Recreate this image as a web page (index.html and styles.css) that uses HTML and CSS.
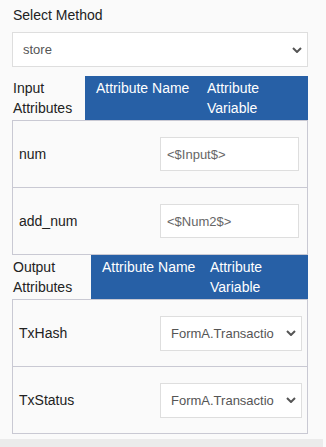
FILE: index.html
```html
<!DOCTYPE html>
<html lang="en">
<head>
  <meta charset="UTF-8">
  <title>Method Attributes</title>
  <link rel="stylesheet" href="styles.css">
</head>
<body>
  <div class="panel">

    <!-- Method -->
    <div class="field-label">Select Method</div>
    <div class="select-wrap method">
      <select>
        <option>store</option>
        <option>retrieve</option>
      </select>
      <svg class="chevron" viewBox="0 0 10 6"><path d="M1 1 L5 5 L9 1"/></svg>
    </div>

    <!-- Input Attributes -->
    <div class="attr-head input-head">
      <div class="attr-title">Input Attributes</div>
      <div class="col-name">Attribute Name</div>
      <div class="col-var">Attribute Variable</div>
    </div>
    <div class="attr-box">
      <div class="attr-row">
        <span class="attr-label">num</span>
        <input class="attr-input" type="text" value="<$Input$>">
      </div>
      <div class="attr-row">
        <span class="attr-label">add_num</span>
        <input class="attr-input" type="text" value="<$Num2$>">
      </div>
    </div>

    <!-- Output Attributes -->
    <div class="attr-head output-head">
      <div class="attr-title">Output Attributes</div>
      <div class="col-name">Attribute Name</div>
      <div class="col-var">Attribute Variable</div>
    </div>
    <div class="attr-box">
      <div class="attr-row">
        <span class="attr-label">TxHash</span>
        <div class="select-wrap attr-select">
          <select>
            <option>FormA.TransactionHash</option>
          </select>
          <svg class="chevron" viewBox="0 0 10 6"><path d="M1 1 L5 5 L9 1"/></svg>
        </div>
      </div>
      <div class="attr-row">
        <span class="attr-label">TxStatus</span>
        <div class="select-wrap attr-select">
          <select>
            <option>FormA.TransactionStatus</option>
          </select>
          <svg class="chevron" viewBox="0 0 10 6"><path d="M1 1 L5 5 L9 1"/></svg>
        </div>
      </div>
    </div>
  </div>
  <div class="footer-bar"></div>
</body>
</html>
```

FILE: styles.css
```css
body {
  margin: 0;
  background: #fafafa;
  color: #222;
  font-family: 'Liberation Sans', Arial, sans-serif;
  font-size: 14px;
}

.panel {
  width: 323px;
  box-sizing: border-box;
  padding: 7px 15px 5px 12px;
}

.field-label {
  line-height: 16px;
  margin-bottom: 9px;
  padding-left: 1px;
}

/* Select boxes */
.select-wrap {
  position: relative;
}

.select-wrap select {
  appearance: none;
  -webkit-appearance: none;
  width: 100%;
  box-sizing: border-box;
  background: #fff;
  border: 1px solid #dedede;
  border-radius: 0;
  font-family: 'Liberation Sans', Arial, sans-serif;
  font-size: 13px;
  color: #555;
  outline: none;
  padding: 0 24px 0 10px;
}

.select-wrap .chevron {
  position: absolute;
  top: 50%;
  width: 10px;
  height: 6px;
  margin-top: -3px;
  fill: none;
  stroke: #555;
  stroke-width: 2;
}

.method {
  margin-bottom: 9px;
}

.method select {
  height: 35px;
}

.method .chevron {
  right: 6px;
}

/* Attribute header */
.attr-head {
  display: flex;
  height: 44px;
  box-sizing: border-box;
  line-height: 20px;
}

.attr-title {
  padding: 2px 0 2px 1px;
  box-sizing: border-box;
}

.attr-head .col-name,
.attr-head .col-var {
  background: #2760a6;
  color: #fff;
  padding: 2px 4px 2px 11px;
  box-sizing: border-box;
}

.attr-head .col-name {
  white-space: nowrap;
  padding-right: 0;
}

.input-head .attr-title { width: 73px; }
.input-head .col-name { width: 111px; }
.input-head .col-var { width: 112px; }

.output-head .attr-title { width: 79px; }
.output-head .col-name { width: 108px; }
.output-head .col-var { width: 109px; }

/* Attribute rows */
.attr-box {
  border: 1px solid #c9c9d3;
  background: #fafafa;
}

.attr-row {
  display: flex;
  align-items: center;
  height: 66px;
  padding-left: 6px;
}

.attr-row + .attr-row {
  border-top: 1px solid #c9c9d3;
}

.attr-label {
  flex: 1;
}

.attr-input {
  width: 139px;
  height: 34px;
  box-sizing: border-box;
  margin-right: 8px;
  border: 1px solid #dedede;
  background: #fff;
  padding: 0 6px;
  font-family: 'Liberation Sans', Arial, sans-serif;
  font-size: 13px;
  color: #666;
  outline: none;
}

.attr-select {
  width: 142px;
  margin-right: 5px;
}

.attr-select select {
  height: 35px;
  padding-right: 27px;
}

.attr-select .chevron {
  right: 6px;
}

.footer-bar {
  width: 323px;
  height: 12px;
  background: #ebebeb;
}
```
